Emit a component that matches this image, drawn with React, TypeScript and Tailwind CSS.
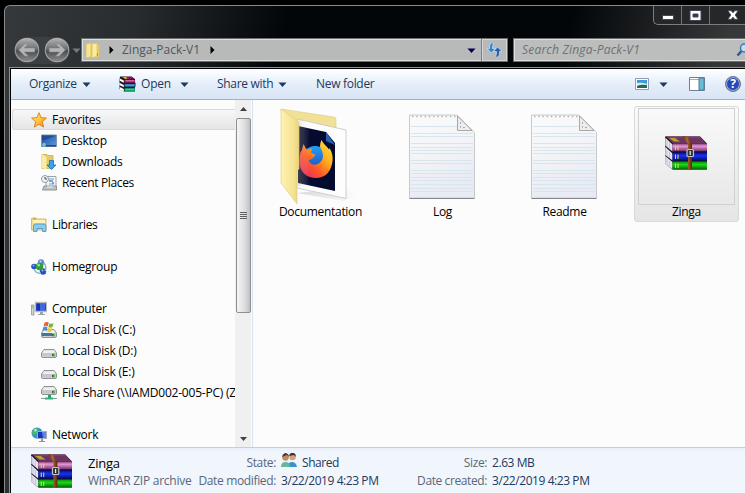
import React from "react";

function Books({ w, h }: { w: number; h: number }) {
  return (
    <svg width={w} height={h} viewBox="0 0 42 34" preserveAspectRatio="none" className="shrink-0">
      <defs>
        <linearGradient id="bkP" x1="0" y1="0" x2="0" y2="1"><stop offset="0" stopColor="#8a3a7a" /><stop offset=".35" stopColor="#e09ad6" /><stop offset="1" stopColor="#7b2a70" /></linearGradient>
        <linearGradient id="bkB" x1="0" y1="0" x2="0" y2="1"><stop offset="0" stopColor="#0010a0" /><stop offset=".4" stopColor="#1a32f5" /><stop offset="1" stopColor="#000870" /></linearGradient>
        <linearGradient id="bkG" x1="0" y1="0" x2="0" y2="1"><stop offset="0" stopColor="#0a900a" /><stop offset=".4" stopColor="#1ad81a" /><stop offset="1" stopColor="#056005" /></linearGradient>
        <linearGradient id="bkBelt"><stop offset="0" stopColor="#5f300c" /><stop offset=".5" stopColor="#b0682c" /><stop offset="1" stopColor="#57290a" /></linearGradient>
      </defs>
      <path d="M0 .5H35L42 7.5V33.5H7.5L.5 28Z" fill="#16101c" />
      <path d="M1 .5H35L41.5 7.500H8Z" fill="#6b3560" />
      <path d="M4 2h6l5 3.500H9Z" fill="#b5a32a" /><path d="M3 1h32" stroke="#875078" />
      <path d="M.3 1.500 7.500 8.500V15.500L.3 9.500ZM.3 10.800 7.500 17.500V24.500L.3 19ZM.3 20 7.500 26V33.200L.3 28Z" fill="#e4e4f0" />
      <path d="M2 4v6M4.500 6.500v5.500M2 13.500v6M4.500 16v6M2 22.500v6M4.500 25v5.500" stroke="#b5b5c9" strokeWidth=".7" />
      <rect x="7.500" y="7.500" width="34.500" height="7.800" rx="1" fill="url(#bkP)" />
      <rect x="7.500" y="16.600" width="34.500" height="8" rx="1" fill="url(#bkB)" />
      <rect x="7.500" y="25.500" width="34.500" height="8" rx="1" fill="url(#bkG)" />
      <path d="M10.500 9.500v4.500M13 9.500v4.500M10.500 18.500v4.500M13 18.500v4.500M10.500 27.500v4.500M13 27.500v4.500" stroke="#e8d743" strokeWidth="1.100" />
      <path d="M17.500.5h4.500L27 8v25.500H23V8Z" fill="url(#bkBelt)" />
      <rect x="22" y="13.500" width="6.500" height="7" rx="1" fill="#333" stroke="#c4c4c4" strokeWidth="1.200" />
      <path d="M25.200 15v4" stroke="#eee" strokeWidth="1.200" />
    </svg>
  );
}

function OpenIcon() {
  return (
    <svg width="17" height="17" viewBox="0 0 17 17" className="shrink-0">
      <path d="M1 .5h11.500L16 3v3l.5 1v3.500l-.5.500v4.500H5L.500 13V9.500L1 8 .500 7V4Z" fill="#1a1a1a" />
      <path d="M2 1h10.500L15.500 3.300H6Z" fill="#8c0f5a" /><path d="M4 1h3l1.500 1.800H6Z" fill="#e0d21e" />
      <path d="M.800 2.500l4 2v2.300l-4-2ZM.800 7l4 2v2.200l-4-2ZM.800 11l4 2v2.500l-4-2Z" fill="#fff" />
      <path d="M5.500 4H16v2.500H5.500Z" fill="#b81f78" /><path d="M5.500 8.200H16v2.500H5.500Z" fill="#1b7dc8" /><path d="M5.500 12.300H16v2.900H5.500Z" fill="#12a86c" />
      <path d="M6.500 4.700H15M6.500 9H15M6.500 13.200H15" stroke="#fff" strokeOpacity=".5" strokeWidth=".8" />
    </svg>
  );
}

function Firefox() {
  return (
    <g>
      <defs>
        <linearGradient id="ffBody" x1="1" y1="0" x2="0" y2="1"><stop offset="0" stopColor="#fff04a" /><stop offset=".35" stopColor="#ffb01d" /><stop offset=".62" stopColor="#ff5a26" /><stop offset="1" stopColor="#e0186b" /></linearGradient>
        <linearGradient id="ffGlobe" x1="0" y1="0" x2="0" y2="1"><stop offset="0" stopColor="#1fa2f5" /><stop offset="1" stopColor="#1e45b8" /></linearGradient>
      </defs>
      <circle cx="35" cy="51" r="13" fill="url(#ffGlobe)" />
      <path d="M21.500 43 23.500 36l3 5.500 5.500-1-1 4 4.500 2.500-3 3.500-4 2c2 4.500 7 5.500 11 2.500 6-5 3-12 .500-16 0-3 .500-5 1.500-7 2 4 5 6 7.500 9.500l.5-1.500c3 5 4 10 2.500 16-2 9-8 14-16 14-9 0-16-6-16.500-15 0-5 .500-8 1-11Z" fill="url(#ffBody)" />
    </g>
  );
}

function FolderBig() {
  return (
    <svg width="84" height="98" viewBox="0 0 84 98" className="shrink-0">
      <defs>
        <linearGradient id="fdFront"><stop offset="0" stopColor="#fdf2b0" /><stop offset=".7" stopColor="#f5e393" /><stop offset="1" stopColor="#e8d178" /></linearGradient>
        <linearGradient id="fdShade"><stop offset="0" stopColor="#bdb285" stopOpacity=".75" /><stop offset="1" stopColor="#fff" stopOpacity="0" /></linearGradient>
        <linearGradient id="fdShadow"><stop offset="0" stopColor="#888" stopOpacity=".3" /><stop offset="1" stopColor="#888" stopOpacity="0" /></linearGradient>
      </defs>
      <path d="M17 85 64 93 77 88 64 80Z" fill="url(#fdShadow)" />
      <path d="M1 1 54 9q2 0 2 3v60L18 78Z" fill="#f0e196" stroke="#dccb80" strokeWidth=".6" />
      <path d="M17 11 66 22V90.500L17 80Z" fill="#fdfdfd" stroke="#c3c3c3" strokeWidth=".8" />
      <path d="M18 18 46 24l9 11V83L18 75Z" fill="#050b2e" />
      <path d="M46 24v9l9 4Z" fill="#2561b6" />
      <Firefox />
      <path d="M18 12h12v66H18Z" fill="url(#fdShade)" opacity=".4" />
      <path d="M1 1 17.500 13q1.500 1 1.500 4v44l-2 2v33L1 75Z" fill="url(#fdFront)" stroke="#dfcb7c" strokeWidth=".6" />
    </svg>
  );
}

function Note() {
  const lines = [12, 19, 22, 29, 33, 36, 39, 46, 49, 56, 59, 63, 66, 70, 74, 77];
  return (
    <svg width="67" height="86" viewBox="0 0 67 86" className="shrink-0">
      <defs><linearGradient id="ntPaper" x1="0" y1="0" x2=".3" y2="1"><stop offset="0" stopColor="#fbfbfb" /><stop offset=".5" stopColor="#f2f4f7" /><stop offset="1" stopColor="#e9ebf4" /></linearGradient></defs>
      <path d="M.5 1H48L65.500 18.500V84H.500Z" fill="url(#ntPaper)" stroke="#c6c8cb" />
      {lines.map((y) => <path key={y} d={`M2 ${y}.5H${y < 19 ? 58 : 64}`} stroke="#d8e5ec" />)}
      <path d="M3 2.500h45" stroke="#b4b4b4" strokeWidth="1.500" strokeDasharray="1.500 2.700" />
      <path d="M48.500 2v14.500H63Z" fill="#ededed" stroke="#a8a8a8" /><path d="M51.500 8v5.500h6" stroke="#aaa" fill="none" strokeDasharray="2 2" />
      <path d="M.5 84.500h65" stroke="#85878c" />
    </svg>
  );
}

type Kind = "star" | "desktop" | "downloads" | "recent" | "libraries" | "homegroup" | "computer" | "windisk" | "disk" | "netdisk" | "network";

const Drive = ({ y }: { y: number }) => (
  <g transform={`translate(0 ${y})`}>
    <path d="M.5 4 3 .5h10L15.500 4v3q0 1.500-1.500 1.500H2Q.5 8.500.5 7Z" fill="#d9dadd" stroke="#85888c" strokeWidth=".9" />
    <path d="M1 4h14v3.500H1Z" fill="#c4c7cb" /><path d="M3 1.500h10l1.500 2.500h-13Z" fill="#f0f0f0" />
    <path d="M11 4.800h3v2.400h-3Z" fill="#555" /><path d="M12.500 4.800h1.500v2.400h-1.500Z" fill="#52d432" />
  </g>
);

function SmallIcon({ kind }: { kind: Kind }) {
  const art: Record<Kind, React.ReactNode> = {
    star: <><defs><linearGradient id="starG" x1="0" y1="0" x2="1" y2="1"><stop offset="0" stopColor="#fff38a" /><stop offset=".5" stopColor="#ffc63a" /><stop offset="1" stopColor="#f07f14" /></linearGradient></defs><path d="m8 .7 2.100 4.900 5.300.5-4 3.600 1.200 5.400L8 12.300l-4.600 2.800 1.200-5.400-4-3.600 5.300-.5Z" fill="url(#starG)" stroke="#d97a20" strokeWidth=".9" /></>,
    desktop: <><defs><linearGradient id="dtG" x1="0" y1="0" x2="1" y2="1"><stop offset="0" stopColor="#1a4da0" /><stop offset="1" stopColor="#5a9be6" /></linearGradient></defs><path d="M.5 2h15v11.500H.5Z" fill="url(#dtG)" stroke="#8494a8" /><path d="M1 2.500h14L1 8Z" fill="#244c91" /><path d="M1 12h14v1.500H1Z" fill="#294671" /><circle cx="3" cy="12" r="2" fill="#54c1ef" /><path d="M2 11h2" stroke="#f4bd30" /></>,
    downloads: <><path d="M1 .5h5l1 1h5v13H1Z" fill="#e5cb68" stroke="#c6a84b" strokeWidth=".7" /><path d="M1 .500 5.500 3v12.500L1 14Z" fill="#faeca5" /><path d="M8.500 6.500h4V11H15l-4.500 4.500L6 11h2.500Z" fill="#39a3ea" stroke="#176eb6" strokeWidth=".8" /></>,
    recent: <><path d="M5 1.500h10v10H5Z" fill="#f5f5f5" stroke="#9da4aa" /><path d="M8 4h5M8 9h5" stroke="#5aabd6" /><path d="M8 6h4M11 8h2" stroke="#4b91c8" strokeWidth="1.500" /><circle cx="4" cy="4" r="3.500" fill="#eef3f6" stroke="#949ca4" /><path d="M4 2v2h2" stroke="#405060" fill="none" /><path d="M3 11h12.500v4H1.500Z" fill="#bfc0c2" stroke="#919396" /><path d="M6 12h6" stroke="#f3f3f3" /></>,
    libraries: <><path d="M.5 2q0-1 1-1h4l1 1h8.500v11H.5Z" fill="#f4dd86" stroke="#cfae52" strokeWidth=".8" /><path d="M2 3h12v3H2Z" fill="#fff3bd" /><path d="M2 2h3" stroke="#61b648" /><path d="M2.500 14.500V9q0-2 2-2h8.500q2 0 2 2v5.500h-3.500v-3H6v3Z" fill="#8bcbed" stroke="#4292c4" strokeWidth=".8" /></>,
    homegroup: <><circle cx="10" cy="3.500" r="3.200" fill="#618bd8" /><circle cx="3" cy="7.500" r="2.800" fill="#2850be" /><circle cx="12" cy="12.500" r="3.200" fill="#2c4fc0" /><path d="M13 4q3 4 1 8M3 10q2 5 7 4" stroke="#80b9cc" strokeWidth="1.500" fill="none" /><circle cx="8.500" cy="7.500" r="3.800" fill="#2d9e38" /><circle cx="7.700" cy="6" r="1.500" fill="#8cdf76" /><circle cx="9.500" cy="2.500" r="1" fill="#c6daff" /><circle cx="2.500" cy="6.500" r=".9" fill="#92b5ff" /><circle cx="11.500" cy="11.500" r=".9" fill="#a1bcff" /></>,
    computer: <><path d="M.5 4h2.500v10H.5Z" fill="#d0d2d4" stroke="#85888b" strokeWidth=".7" /><path d="M1 6h1.500" stroke="#4cc831" /><path d="M4.500 1.500h11v9h-11Z" fill="#1632b8" stroke="#b8bbc0" strokeWidth="1.300" /><path d="M9 2h5v8H9Z" fill="#5680eb" opacity=".7" /><path d="M9 11h3v2h2v1H7v-1h2Z" fill="#9da3a9" /></>,
    windisk: <><Drive y={7} /><path d="M1 11h10v3H1Z" fill="#3e7995" /><path d="M3.500.800q2.200-1.600 4.200-.2L6.700 4.500q-2-1.400-4.200 0Z" fill="#ee6135" /><path d="M8.300 1.200q2 1.200 4.200-.2l-1 4q-2.200 1.400-4.200 0Z" fill="#70b842" /><path d="M2.300 5.300q2.200-1.400 4.200 0l-1 3.700q-2-1.400-4.200 0Z" fill="#438fd8" /><path d="M7.100 5.700q2 1.400 4.200 0l-1 3.700q-2.200 1.400-4.200 0Z" fill="#f6c533" /></>,
    disk: <Drive y={6} />,
    netdisk: <><Drive y={1} /><path d="M7 10h3v3H7Z" fill="#24a567" /><path d="M0 13.500h16" stroke="#8f9b9a" /><path d="M4 12.500h8v2H4Z" fill="#28b577" /></>,
    network: <><circle cx="6" cy="6" r="5.500" fill="#3295cf" /><path d="M2 3Q5 0 8 2L6 6 3 8Q0 6 2 3Z" fill="#51bb55" /><path d="M3 2.500q2-1 3 0L4 5Z" fill="#d0f2d6" /><path d="M6.500 4.500h9v7h-9Z" fill="#1734bb" stroke="#a3abba" /><path d="M11 5h4v6h-3Z" fill="#5e84e4" /><path d="M10 12h2v2h2v1H8v-1h2Z" fill="#8f969f" /></>,
  };
  return <svg width="16" height="16" viewBox="0 0 16 16" className="shrink-0">{art[kind]}</svg>;
}

const Down = ({ fill = "#1e395b" }: { fill?: string }) => <svg width="9" height="5" viewBox="0 0 9 5" className="shrink-0"><path d="M.5.500h8l-4 4.500Z" fill={fill} /></svg>;
const Right = () => <svg width="5" height="8" viewBox="0 0 5 8" className="shrink-0"><path d="M.5 0 4.500 4l-4 4Z" fill="#000" /></svg>;

function RoundButton({ flip }: { flip?: boolean }) {
  return (
    <svg width="26" height="26" viewBox="0 0 25 25" className={flip ? "shrink-0 -scale-x-100" : "shrink-0"}>
      <defs><linearGradient id="rbG" x1="0" y1="0" x2="0" y2="1"><stop offset="0" stopColor="#b0b2b3" /><stop offset=".45" stopColor="#6f7172" /><stop offset=".55" stopColor="#4c4e50" /><stop offset="1" stopColor="#8c9093" /></linearGradient></defs>
      <circle cx="12.500" cy="12.500" r="11.300" fill="url(#rbG)" stroke="#c5c9cb" strokeOpacity=".7" />
      <path d="M4.500 12.500 10.500 6.500h3.500l-4 4H20v4H10l4 4h-3.500Z" fill="#b2b4b5" stroke="#7c7e80" strokeWidth=".5" />
    </svg>
  );
}

const nav: (null | { k: Kind; t: string; sub?: boolean; tight?: boolean })[] = [
  { k: "star", t: "Favorites" },
  { k: "desktop", t: "Desktop", sub: true },
  { k: "downloads", t: "Downloads", sub: true },
  { k: "recent", t: "Recent Places", sub: true, tight: true },
  null,
  { k: "libraries", t: "Libraries", tight: true },
  null,
  { k: "homegroup", t: "Homegroup" },
  null,
  { k: "computer", t: "Computer" },
  { k: "windisk", t: "Local Disk (C:)", sub: true },
  { k: "disk", t: "Local Disk (D:)", sub: true },
  { k: "disk", t: "Local Disk (E:)", sub: true },
  { k: "netdisk", t: "File Share (\\\\IAMD002-005-PC) (Z:)", sub: true },
  null,
  { k: "network", t: "Network" },
];

function FileItem({ name, children, selected }: { name: string; children: React.ReactNode; selected?: boolean }) {
  return (
    <div className={"flex h-[116px] w-[105px] shrink-0 flex-col items-center rounded-[3px] border pt-px " + (selected ? "border-[#d9d9d9] bg-linear-to-b from-[#fafafa] to-[#e5e5e5]" : "border-transparent")}>
      <div className={"flex h-[97px] w-[97px] items-center justify-center border " + (selected ? "border-[#d0d0d0]" : "border-transparent")}>{children}</div>
      <span className="leading-[14px] tracking-[-0.3px]">{name}</span>
    </div>
  );
}

export default function App() {
  return (
    <div className="h-[493px] w-[745px] overflow-hidden bg-black pt-[5px] pl-1 font-['Open_Sans','Noto_Sans',sans-serif] text-[12px] leading-4 whitespace-nowrap text-black">
      <div className="flex h-[488px] w-[741px] flex-col rounded-tl-[6px] border-t border-l border-[#898b8c] bg-[linear-gradient(100deg,#36393b_0px,#292c2e_130px,#030608_280px,#030608_560px,#36383a_720px)]">
        <div className="flex h-[31px] shrink-0 justify-end">
          <div className="flex h-[19px] w-[92px] rounded-bl-[5px] border-b border-l border-[#7b7d7f] bg-[#252729]">
            <div className="flex w-7 items-center justify-center border-r border-[#727477] pl-px"><div className="mt-1 h-[5px] w-3 border border-[#45475a] bg-white" /></div>
            <div className="flex w-7 items-center justify-center border-r border-[#727477]"><svg width="13" height="11" viewBox="0 0 13 11"><path d="M1 .5h11v10H1Z" fill="#fff" stroke="#45475a" /><path d="M4 4h5v3H4Z" fill="#35353e" stroke="#45475a" /></svg></div>
            <div className="flex flex-1 items-center pl-[17px]"><svg width="12" height="10" viewBox="0 0 14 11"><path d="M1 .500h4l2 2.500 2-2.500h4L9.500 5.500l3.500 5H9L7 8l-2 2.500H1l3.500-5Z" fill="#fff" stroke="#45475a" /></svg></div>
          </div>
        </div>
        <div className="flex h-[26px] shrink-0 items-center overflow-visible pl-[9px]">
          <div className="flex h-[27px] w-[56px] shrink-0 items-center justify-between rounded-full bg-[#45484a]/60"><RoundButton /><RoundButton flip /></div>
          <div className="flex w-[11px] shrink-0 justify-end"><Down fill="#777a7c" /></div>
          <div className="flex h-6 w-[427px] shrink-0 items-center border border-[#6c6e6f] bg-[#b8b9b9] pl-[3px] shadow-[inset_0_0_0_1px_#dedede]">
            <svg width="15" height="17" viewBox="0 0 15 17" className="shrink-0"><path d="M3 2 9 1l5 2v12l-5 1-6-1Z" fill="#e7cd68" /><path d="M1 2 6 1v14l-5 1Z" fill="#f7e491" stroke="#d7b953" strokeWidth=".6" /><path d="M7 2l5-1v13l-5 2Z" fill="#fbeaa0" stroke="#d7b953" strokeWidth=".6" /><path d="M12.500 11v3" stroke="#58a5d5" /></svg>
            <div className="flex w-[21px] justify-end pr-[7px]"><Right /></div>
            <span className="flex-1 text-[#50565a]"><span className="mr-[10px] pl-[1px]">Zinga-Pack-V1</span><span className="inline-block"><Right /></span></span>
            <div className="mr-[5px]"><Down fill="#000050" /></div>
            <div className="flex h-[22px] w-[26px] items-center justify-center border-l border-[#7d7f80] shadow-[inset_0_0_0_1px_#d6d6d6]">
              <svg width="15" height="14" viewBox="0 0 15 14"><path d="M4 0h3Q5 2 5.500 5.500h3l-4 4.500L0 5.500h2.500Q2 2 4 0Z" fill="#3386d6" stroke="#e3edf6" strokeWidth=".6" /><path d="M11 14H8q2-2 1.500-5.500H6.500L10.500 4 15 8.500h-2.500q.500 3.500-1.500 5.500Z" fill="#2460b4" stroke="#e3edf6" strokeWidth=".6" /></svg>
            </div>
          </div>
          <div className="ml-[5px] flex h-6 w-[240px] shrink-0 items-center border border-[#6c6e6f] bg-[#bcbdbd] pl-[8px] shadow-[inset_0_0_0_1px_#dedede]">
            <span className="w-[214px] tracking-[0.2px] text-[#6d7174] italic">Search Zinga-Pack-V1</span>
            <svg width="14" height="14" viewBox="0 0 14 14" className="shrink-0"><path d="m1.500 12.500 4-4.500" stroke="#255e9f" strokeWidth="2.500" /><circle cx="8.500" cy="5" r="4" fill="#cadfeb" stroke="#3779b7" strokeWidth="1.500" /></svg>
          </div>
        </div>
        <div className="ml-[4px] mt-[4px] flex h-[427px] flex-col border-t border-l border-[#909293] bg-black pt-px pl-px">
          <div className="flex h-[31px] shrink-0 items-center border-b border-[#a0b0cc] bg-linear-to-b from-[#fafcff] from-10% via-[#e5eefa] via-50% to-[#d9e5f5] pl-[18px] tracking-[-0.3px] text-[#1e395b]">
            <div className="flex w-[90px] items-center gap-[5px]"><span>Organize</span><Down /></div>
            <div className="flex w-[98px] items-center"><OpenIcon /><span className="mr-[9px] ml-[5px] tracking-[-0.2px]">Open</span><Down /></div>
            <div className="flex w-[99px] items-center gap-[5px]"><span>Share with</span><Down /></div>
            <span className="w-[319px]">New folder</span>
            <svg width="14" height="12" viewBox="0 0 14 12" className="mr-[10px]"><path d="M.5.500h13v11H.5Z" fill="#fff" stroke="#8c9eb8" /><path d="M2 2h10v8H2Z" fill="#3b9ad9" /><path d="M2 5q5-1 10 1v2H2Z" fill="#d2edf4" /><path d="M2 8q4-2 10-1v3H2Z" fill="#2c6654" /></svg>
            <Down />
            <svg width="16" height="14" viewBox="0 0 16 14" className="mr-5 ml-[21px] shrink-0"><path d="M.5.500h15v13H.5Z" fill="#fff" stroke="#6c7f99" /><path d="M1 2.500h9" stroke="#9caec5" /><path d="M10 1h5v12h-5Z" fill="#65bdd6" stroke="#557b99" /></svg>
            <div className="flex size-4 shrink-0 items-center justify-center rounded-full border border-[#777b86] bg-[#2549b9] text-[12px] font-bold text-white shadow-[inset_0_0_0_1px_#a2b1df]">?</div>
          </div>
          <div className="flex h-[347px] shrink-0 bg-[#fcfcfc]">
            <div className="flex w-[224px] flex-col overflow-hidden pt-[9px]">
              {nav.map((n, i) => (
                <div key={i} className={"flex h-[21px] shrink-0 items-center gap-[5px] " + (i === 0 ? "ml-px rounded-l-[3px] border border-r-0 border-[#d9d9d9] bg-linear-to-b from-[#f8f8f8] to-[#e5e5e5] pl-[18px]" : n?.sub ? "pl-[30px]" : "pl-5")}>
                  {n && <><SmallIcon kind={n.k} /><span className={n.tight ? "tracking-[-0.35px]" : "tracking-[-0.22px]"}>{n.t}</span></>}
                </div>
              ))}
            </div>
            <div className="flex w-[16px] flex-col items-center bg-[#f0f0f0]">
              <div className="flex h-[18px] items-center"><svg width="7" height="4" viewBox="0 0 7 4"><path d="M0 4 3.500 0 7 4Z" fill="#404040" /></svg></div>
              <div className="flex h-[195px] w-[15px] flex-col items-center justify-center gap-[1px] rounded-[2px] border border-[#8e8e8e] bg-linear-to-r from-[#f5f5f5] via-[#dedee0] via-60% to-[#bfbfc4]">
                {[0, 1, 2, 3].map((i) => <div key={i} className="h-px w-[7px] bg-[#5f6062]" />)}
              </div>
              <div className="mt-auto flex h-[17px] items-center"><svg width="7" height="4" viewBox="0 0 7 4"><path d="M0 0h7L3.500 4Z" fill="#404040" /></svg></div>
            </div>
            <div className="ml-px w-px bg-[#d5e4f5]" />
            <div className="flex flex-1 gap-[17px] overflow-hidden pt-[6px] pl-[15px]">
              <FileItem name="Documentation"><div className="mt-[1px] ml-[2px] flex"><FolderBig /></div></FileItem>
              <FileItem name="Log"><Note /></FileItem>
              <FileItem name="Readme"><Note /></FileItem>
              <FileItem name="Zinga" selected><div className="-mt-[7px] -ml-px"><Books w={42} h={34} /></div></FileItem>
            </div>
          </div>
          <div className="flex h-[46px] shrink-0 border-t border-[#bfd0e5] bg-linear-to-b from-[#e9f0fa] to-[#f1f5fc] to-10% pt-[7px] pl-[20px] text-[#1e395b]">
            <div className="-mt-px"><Books w={41} h={34} /></div>
            <div className="ml-[16px] flex w-[110px] flex-col gap-[2px] tracking-[-0.25px]"><span className="text-[13px] text-black">Zinga</span><span className="text-[#5a6779]">WinRAR ZIP archive</span></div>
            <div className="flex w-[78px] flex-col items-end gap-[2px] tracking-[-0.35px] text-[#5a6779]"><span>State:</span><span>Date modified:</span></div>
            <div className="ml-[5px] flex w-[127px] flex-col gap-[2px] tracking-[-0.43px]">
              <span className="flex gap-[5px] tracking-[-0.45px]"><svg width="16" height="14" viewBox="0 0 16 14" className="-mt-[2px]"><circle cx="11.500" cy="4" r="3.200" fill="#d1a27c" /><path d="M8 3q1-4 5-3 2 1 2 4l-2-2Z" fill="#423229" /><path d="M7 14q0-5 4-5t5 5Z" fill="#3695c5" /><circle cx="4.500" cy="4.500" r="3.200" fill="#be8b65" /><path d="M1 4q1-4 4-4 3 1 3 4L6 2Z" fill="#4b3b31" /><path d="M0 14q0-5 4.500-5T9 14Z" fill="#66b79b" /></svg>Shared</span>
              <span>3/22/2019 4:23 PM</span>
            </div>
            <div className="flex w-[79px] flex-col items-end gap-[2px] tracking-[-0.4px] text-[#5a6779]"><span>Size:</span><span>Date created:</span></div>
            <div className="ml-[5px] flex flex-col gap-[2px] tracking-[-0.43px]"><span>2.63 MB</span><span>3/22/2019 4:23 PM</span></div>
          </div>
        </div>
      </div>
    </div>
  );
}
